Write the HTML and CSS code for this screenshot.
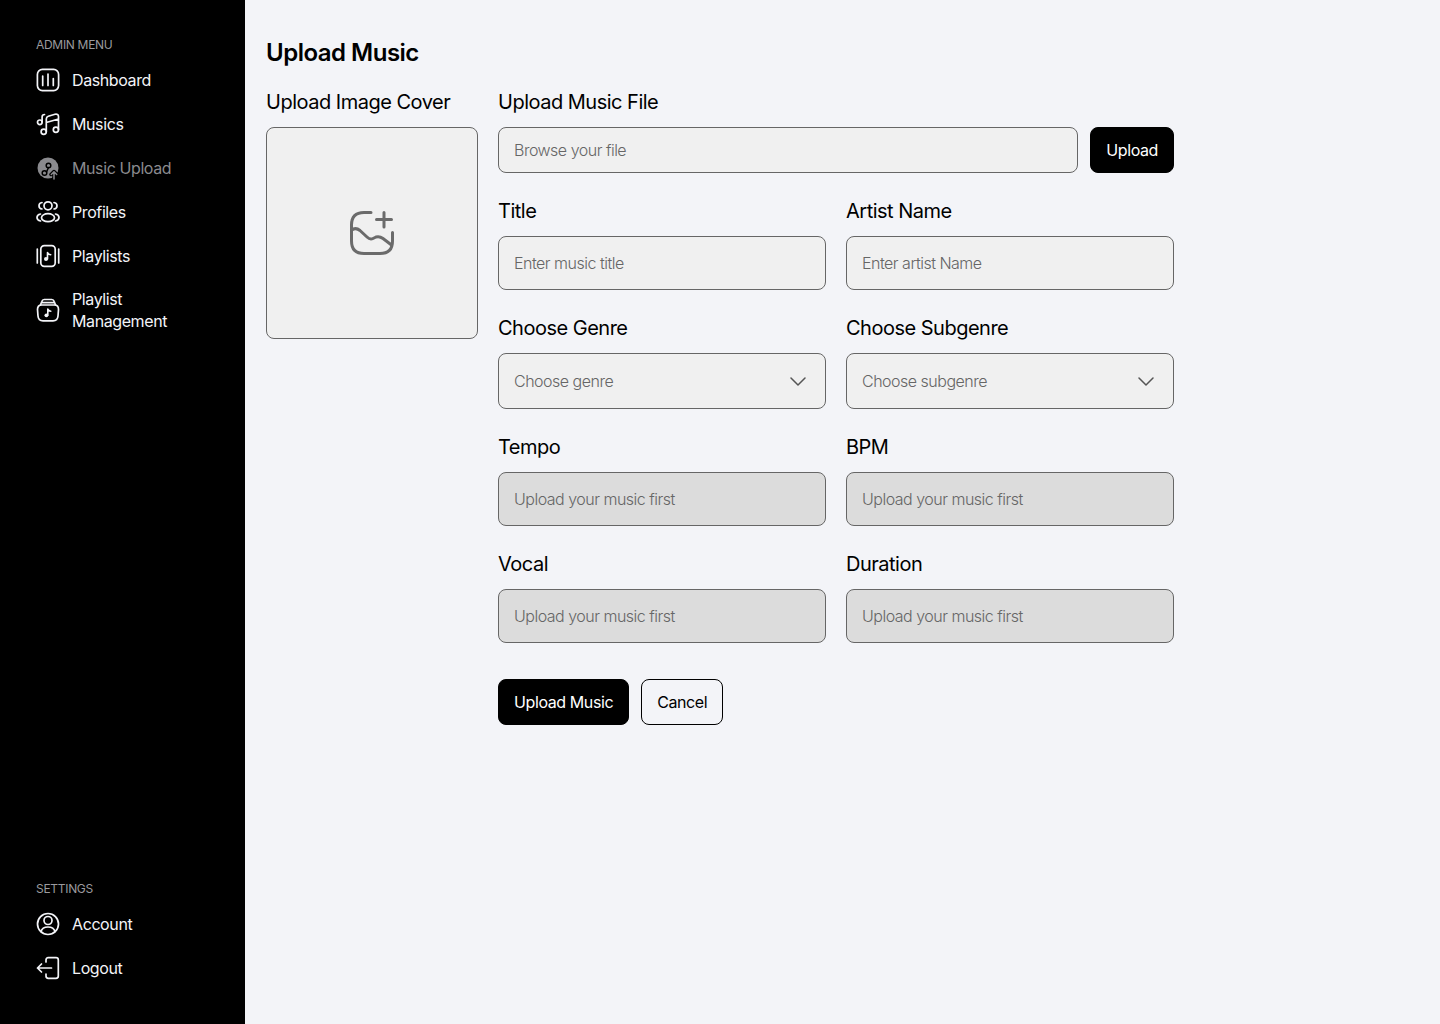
FILE: index.html
```html
<!DOCTYPE html>
<html lang="en">
<head>
<meta charset="utf-8">
<title>Upload Music</title>
<link rel="stylesheet" href="styles.css">
</head>
<body>
<div class="app">
  <aside class="sidebar">
    <nav class="menu">
      <div class="menu-title">ADMIN MENU</div>
      <a class="item"><svg class="icon" viewBox="0 0 24 24"><rect x="1.400" y="1.400" width="21.200" height="21.200" rx="5"/><path d="M6.700 8v9.500M12 6v11.500M17.300 10.500v7"/></svg><span>Dashboard</span></a>
      <a class="item"><svg class="icon" viewBox="0 0 24 24"><path d="M10.300 19.500V7c0-1.500.7-2.300 2-2.700l6.700-2c2-.5 3.500.4 3.500 2.200v13M10.300 10.500l12.200-3.500"/><circle cx="7.700" cy="19.800" r="2.600"/><circle cx="19.900" cy="17.800" r="2.600"/><circle cx="3.800" cy="10.300" r="2.300"/><path d="M6.100 10V5c0-1.600.9-2.500 2.400-2.500"/></svg><span>Musics</span></a>
      <a class="item muted"><svg class="icon" viewBox="0 0 24 24"><circle cx="12" cy="12" r="10.500" fill="#8a8a8e" stroke="none"/><circle cx="8.500" cy="17" r="2.300" fill="none" stroke="#000" stroke-width="1.500"/><circle cx="12.500" cy="9.500" r="2.300" fill="none" stroke="#000" stroke-width="1.500"/><path d="M10.500 16l2-4.500" stroke="#000" stroke-width="1.500" fill="none"/><path d="M18 23v-7M15 18.500l3-3 3 3" stroke="#000" stroke-width="3.500" fill="none"/><path d="M18 23v-7M15.300 18.500l2.700-2.700 2.700 2.700" stroke="#8a8a8e" stroke-width="1.500" fill="none"/></svg><span>Music Upload</span></a>
      <a class="item"><svg class="icon" viewBox="0 0 24 24"><circle cx="12" cy="5.800" r="4"/><ellipse cx="12" cy="17.700" rx="6.500" ry="4"/><path d="M6 2.500C4 2.700 3 4.200 3 5.800S4 8.800 6 9M18 2.500c2 .2 3 1.700 3 3.300s-1 3-3 3.200M4.500 14C2.200 14.500 1 16 1 17.500S2.200 20.500 4.500 21M19.500 14c2.300.5 3.500 2 3.500 3.500S21.800 20.500 19.500 21"/></svg><span>Profiles</span></a>
      <a class="item"><svg class="icon" viewBox="0 0 24 24"><rect x="4.800" y="1.700" width="14.400" height="20.600" rx="3.500"/><path d="M1.300 5v14M22.700 5v14"/><circle class="solid" cx="10" cy="15" r="2"/><path class="thin" d="M11.500 15V8.500c.5 1.500 1.700 2.100 3.200 2.200"/></svg><span>Playlists</span></a>
      <a class="item tall"><svg class="icon" viewBox="0 0 24 24"><path d="M1.500 11.500C1.500 8.700 3 7 5.500 7h13c2.500 0 4 1.700 4 4.500l-.5 6.500c-.2 3-2 4.800-5 4.800H7c-3 0-4.800-1.800-5-4.800z"/><path d="M4.500 7l1.300-3.500C6.200 2.200 7 1.500 8.300 1.500h7.400c1.300 0 2.100.7 2.500 2L19.500 7M5.500 4.700h13"/><circle class="solid" cx="10.400" cy="17.300" r="1.900"/><path class="thin" d="M11.800 17.300v-6.200c.5 1.500 1.600 2 3 2.100"/></svg><span>Playlist<br>Management</span></a>
    </nav>
    <nav class="menu bottom">
      <div class="menu-title">SETTINGS</div>
      <a class="item"><svg class="icon" viewBox="0 0 24 24"><circle cx="12" cy="12" r="10.500"/><circle cx="12" cy="8.500" r="4"/><path d="M5 19.700c.8-3.200 3.500-4.700 7-4.700s6.200 1.500 7 4.700"/></svg><span>Account</span></a>
      <a class="item"><svg class="icon" viewBox="0 0 24 24"><path d="M10 6V4c0-1.500.8-2.300 2.300-2.300h7.700c1.500 0 2.300.8 2.300 2.300v16c0 1.500-.8 2.300-2.300 2.300h-7.700c-1.500 0-2.300-.8-2.300-2.300v-2"/><path d="M15.500 12H1.500M5.500 8l-4 4 4 4"/></svg><span>Logout</span></a>
    </nav>
  </aside>
  <main class="main">
    <h1 class="page-title">Upload Music</h1>
    <form class="form">
      <section class="cover-col">
        <label class="label">Upload Image Cover</label>
        <div class="cover">
          <svg class="cover-icon" viewBox="0 0 44 44"><path d="M21 1.500H14C5.500 1.500 1.500 5.500 1.500 14v16c0 8.500 4 12.500 12.500 12.500h16c8.500 0 12.500-4 12.500-12.500V21.500"/><path d="M26.500 8.500h15M34 1.500v14.500"/><path d="M1.500 19.500C4 17 7 17 10 19.500L17 26c2 2 4 2.500 6 1.500l3-1.500c3-1 5 0 7 1.500l8.500 6.500"/></svg>
        </div>
      </section>
      <section class="fields">
        <div class="field">
          <label class="label">Upload Music File</label>
          <div class="file-row">
            <input class="input short" type="text" placeholder="Browse your file">
            <button class="btn primary" type="button">Upload</button>
          </div>
        </div>
        <div class="grid">
          <div class="field"><label class="label">Title</label><input class="input" type="text" placeholder="Enter music title"></div>
          <div class="field"><label class="label">Artist Name</label><input class="input" type="text" placeholder="Enter artist Name"></div>
          <div class="field"><label class="label">Choose Genre</label><div class="input select"><span>Choose genre</span><svg class="chev" viewBox="0 0 16 9"><path d="M1 1l7 7 7-7"/></svg></div></div>
          <div class="field"><label class="label">Choose Subgenre</label><div class="input select"><span>Choose subgenre</span><svg class="chev" viewBox="0 0 16 9"><path d="M1 1l7 7 7-7"/></svg></div></div>
          <div class="field"><label class="label">Tempo</label><input class="input disabled" type="text" placeholder="Upload your music first"></div>
          <div class="field"><label class="label">BPM</label><input class="input disabled" type="text" placeholder="Upload your music first"></div>
          <div class="field"><label class="label">Vocal</label><input class="input disabled" type="text" placeholder="Upload your music first"></div>
          <div class="field"><label class="label">Duration</label><input class="input disabled" type="text" placeholder="Upload your music first"></div>
        </div>
        <div class="actions">
          <button class="btn primary" type="button">Upload Music</button>
          <button class="btn outline" type="button">Cancel</button>
        </div>
      </section>
    </form>
  </main>
</div>
</body>
</html>
```
FILE: styles.css
```css
* { box-sizing: border-box; }
html, body { margin: 0; height: 100%; }
body {
  font-family: "Inter", "Liberation Sans", sans-serif;
  background: #f3f4f8;
  color: #000;
}
.app { display: flex; height: 1024px; }
.sidebar {
  width: 245px;
  flex: none;
  background: #000;
  color: #f3f4f8;
  padding: 37px 36px 44px;
  display: flex;
  flex-direction: column;
  justify-content: space-between;
}
.menu { display: flex; flex-direction: column; gap: 20px; }
.menu-title {
  font-size: 12px;
  line-height: 16px;
  letter-spacing: -0.3px;
  color: #9a9a9e;
  margin-bottom: -5px;
}
.item {
  display: flex;
  align-items: center;
  gap: 12px;
  font-size: 16px;
  line-height: 22px;
  letter-spacing: -0.4px;
  min-height: 24px;
}
.item.muted { color: #8a8a8e; }
.icon {
  width: 24px;
  height: 24px;
  flex: none;
  fill: none;
  stroke: #f3f4f8;
  stroke-width: 1.7;
  stroke-linecap: round;
  stroke-linejoin: round;
}
.icon .solid { fill: #f3f4f8; stroke: none; }
.icon .thin { stroke-width: 1.6; }
.main { flex: 1; padding: 37px 0 0 21px; }
.page-title {
  margin: 0 0 20px;
  font-size: 24px;
  line-height: 32px;
  font-weight: 600;
  letter-spacing: -0.5px;
}
.form { display: flex; gap: 20px; align-items: flex-start; }
.cover-col { width: 212px; display: flex; flex-direction: column; }
.label {
  display: block;
  font-size: 20px;
  line-height: 26px;
  letter-spacing: -0.5px;
  margin-bottom: 12px;
  white-space: nowrap;
}
.cover {
  height: 212px;
  background: #f0f0f0;
  border: 1px solid #666;
  border-radius: 8px;
  display: flex;
  align-items: center;
  justify-content: center;
}
.cover-icon {
  width: 44px;
  height: 44px;
  fill: none;
  stroke: #6b6b6b;
  stroke-width: 3;
  stroke-linecap: round;
  stroke-linejoin: round;
}
.fields { width: 676px; display: flex; flex-direction: column; }
.field { display: flex; flex-direction: column; min-width: 0; }
.file-row { display: flex; gap: 12px; margin-bottom: 25px; }
.grid { display: grid; grid-template-columns: 328px 328px; column-gap: 20px; row-gap: 25px; }
.input {
  width: 100%;
  height: 54px;
  padding: 0 15px;
  background: #f0f0f0;
  border: 1px solid #666;
  border-radius: 8px;
  font: inherit;
  font-size: 16px;
  font-weight: 300;
  letter-spacing: -0.5px;
  outline: none;
  color: #666;
}
.input::placeholder { color: #666; opacity: 1; }
.input.short { height: 46px; flex: 1; width: auto; min-width: 0; }
.input.disabled { background: #dcdcdc; }
.select {
  height: 56px;
  display: flex;
  align-items: center;
  justify-content: space-between;
}
.chev {
  width: 16px;
  height: 9px;
  margin-right: 4px;
  fill: none;
  stroke: #555;
  stroke-width: 1.5;
  stroke-linecap: round;
  stroke-linejoin: round;
}
.actions { display: flex; gap: 12px; margin-top: 36px; }
.btn {
  height: 46px;
  padding: 0 15px;
  border-radius: 8px;
  font: inherit;
  font-size: 16px;
  font-weight: 400;
  letter-spacing: -0.4px;
  cursor: pointer;
  white-space: nowrap;
  flex: none;
}
.primary { background: #000; color: #fff; border: 1px solid #000; }
.outline { background: transparent; color: #000; border: 1px solid #000; }
```
